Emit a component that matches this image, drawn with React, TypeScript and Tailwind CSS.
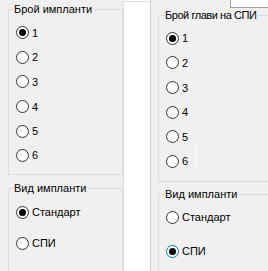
import React from "react";

function Radio({ checked, focus }: { checked?: boolean; focus?: boolean }) {
  return (
    <span
      className={
        focus
          ? "w-[13px] h-[13px] rounded-full border border-[#0078d7] bg-white flex items-center justify-center shrink-0"
          : "w-[13px] h-[13px] rounded-full border border-[#333333] bg-white flex items-center justify-center shrink-0"
      }
    >
      {checked && <span className="w-[7px] h-[7px] rounded-full bg-black" />}
    </span>
  );
}

function Row({
  label,
  checked,
  focus,
  h,
}: {
  label: string;
  checked?: boolean;
  focus?: boolean;
  h: string;
}) {
  return (
    <div className={`flex items-center gap-[3px] ${h}`}>
      <Radio checked={checked} focus={focus} />
      <span className="text-[11px] leading-[14px] text-black">{label}</span>
    </div>
  );
}

const leftH = ["h-[25px]", "h-[24px]", "h-[25px]", "h-[25px]", "h-[24px]", "h-[24px]"];
const rightH = ["h-[24px]", "h-[25px]", "h-[25px]", "h-[24px]", "h-[25px]", "h-[24px]"];
const nums = ["1", "2", "3", "4", "5", "6"];

export default function App() {
  return (
    <div className="w-[268px] h-[271px] flex overflow-hidden bg-white font-['Liberation_Sans',Arial,sans-serif] text-black">
      {/* Left panel */}
      <div className="w-[123px] h-full shrink-0 bg-[#f0f0f0] flex flex-col pl-[8px] pt-[2px]">
        <fieldset className="w-[115px] h-[173px] shrink-0 border border-[#dcdcdc] px-[5px]">
          <legend className="text-[11px] leading-[14px] pr-[2px]">Брой импланти</legend>
          <div className="flex flex-col pl-[2px] mt-[4px]">
            {nums.map((n, i) => (
              <Row key={n} label={n} checked={i === 0} h={leftH[i]} />
            ))}
          </div>
        </fieldset>
        <fieldset className="w-[115px] h-[120px] shrink-0 mt-[6px] border border-[#dcdcdc] px-[5px]">
          <legend className="text-[11px] leading-[14px] pr-[2px]">Вид импланти</legend>
          <div className="flex flex-col pl-[2px] mt-[5px]">
            <Row label="Стандарт" checked h="h-[24px]" />
            <div className="mt-[7px]">
              <Row label="СПИ" h="h-[24px]" />
            </div>
          </div>
        </fieldset>
      </div>

      {/* Middle strip */}
      <div className="w-[27px] h-full shrink-0 bg-white pt-[1px]">
        <div className="h-full border-t border-l border-[#dcdcdc]" />
      </div>

      {/* Right panel */}
      <div className="relative w-[118px] h-full shrink-0 bg-[#f0f0f0] border-l border-[#d0d0d0] flex flex-col overflow-hidden">
        <div className="flex justify-end h-[8px] shrink-0">
          <div className="w-[38px] h-[8px] bg-white border-l border-b border-[#a0a0a0]" />
        </div>
        <fieldset className="ml-[7px] w-[125px] h-[174px] shrink-0 border border-[#dcdcdc] px-[6px]">
          <legend className="text-[11px] leading-[14px] tracking-[-0.45px] pr-[2px]">Брой глави на СПИ</legend>
          <div className="flex flex-col pl-[1px] mt-[4px]">
            {nums.map((n, i) => (
              <Row key={n} label={n} checked={i === 0} h={rightH[i]} />
            ))}
          </div>
        </fieldset>
        <fieldset className="ml-[7px] w-[125px] h-[120px] shrink-0 mt-[5px] border border-[#dcdcdc] px-[6px]">
          <legend className="text-[11px] leading-[14px] pr-[2px]">Вид импланти</legend>
          <div className="flex flex-col pl-[1px] mt-[4px]">
            <Row label="Стандарт" h="h-[24px]" />
            <div className="mt-[10px]">
              <Row label="СПИ" checked focus h="h-[24px]" />
            </div>
          </div>
        </fieldset>
        <div className="absolute left-[45px] top-[143px] w-px h-[25px] bg-white" />
      </div>
    </div>
  );
}
